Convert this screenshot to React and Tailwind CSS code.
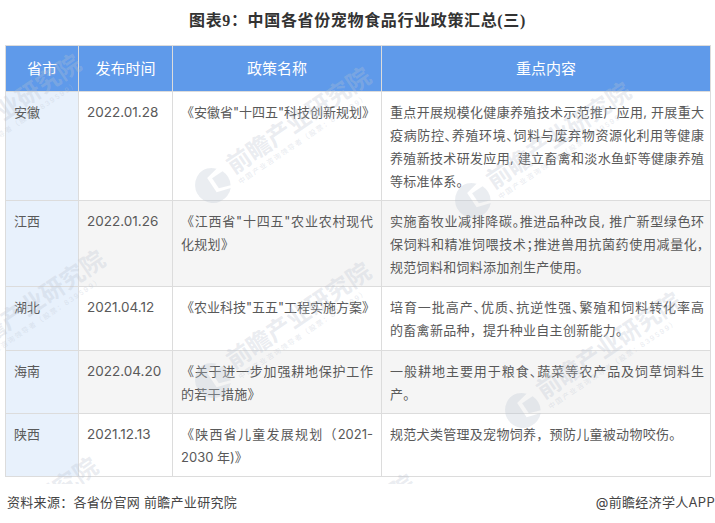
const WM = ({ x, y }) => (
  <div
    className="absolute flex items-center w-[230px] h-[44px] origin-[18px_22px] rotate-[-34deg]"
    style={{ left: x - 18, top: y - 22 }}
  >
    <svg width="36" height="36" viewBox="0 0 36 36" className="shrink-0">
      <path d="M18 0a18 18 0 1 0 13 30.500L17 26V9l13-2.500A18 18 0 0 0 18 0z" fill="#b9c2cf" fillOpacity="0.3" />
      <path d="M21 12h12.500a18 18 0 0 1-1 16L21 24z" fill="#b9c2cf" fillOpacity="0.3" />
    </svg>
    <div className="ml-[5px] flex flex-col text-[#b9c2cf]/30 whitespace-nowrap">
      <span className="text-[24px] leading-[26px] font-bold">前瞻产业研究院</span>
      <span className="text-[7px] leading-[10px] tracking-[1.500px] font-medium">中国产业咨询领导者（股票：839599）</span>
    </div>
  </div>
);

const marks = [
  [-77, 172], [213, 185], [473, 200],
  [-53, 368], [213, 380], [523, 410],
  [-60, 575], [257, 592],
];

const L = ({ children, j = true, palt = false }) => (
  <span
    className={
      "block whitespace-nowrap " +
      (j ? "[text-align:justify] [text-align-last:justify] " : "tracking-[0.3px] ") +
      (palt ? "[font-feature-settings:'palt']" : "")
    }
  >
    {children}
  </span>
);

const rows = [
  {
    h: "h-[109px]",
    bg: "bg-white",
    p: "安徽",
    d: "2022.01.28",
    n: [<L j={false} key="1"><span className="tracking-normal">《安徽省"十四五"科技创新规划》</span></L>],
    c: [
      <L key="1" palt>重点开展规模化健康养殖技术示范推广应用, 开展重大</L>,
      <L key="2" palt>疫病防控、养殖环境、饲料与废弃物资源化利用等健康</L>,
      <L key="3" palt>养殖新技术研发应用, 建立畜禽和淡水鱼虾等健康养殖</L>,
      <L key="4" j={false}>等标准体系。</L>,
    ],
  },
  {
    h: "h-[86px]",
    bg: "bg-[#f5f5f5]",
    p: "江西",
    d: "2022.01.26",
    n: [<L key="1">《江西省"十四五"农业农村现代</L>, <L key="2" j={false}>化规划》</L>],
    c: [
      <L key="1" palt>实施畜牧业减排降碳。推进品种改良, 推广新型绿色环</L>,
      <L key="2" palt>保饲料和精准饲喂技术；推进兽用抗菌药使用减量化，</L>,
      <L key="3" j={false}>规范饲料和饲料添加剂生产使用。</L>,
    ],
  },
  {
    h: "h-[64px]",
    bg: "bg-white",
    p: "湖北",
    d: "2021.04.12",
    n: [<L j={false} key="1"><span className="tracking-normal">《农业科技"五五"工程实施方案》</span></L>],
    c: [
      <L key="1" palt>培育一批高产、优质、抗逆性强、繁殖和饲料转化率高</L>,
      <L key="2" j={false}>的畜禽新品种，提升种业自主创新能力。</L>,
    ],
  },
  {
    h: "h-[63px]",
    bg: "bg-[#f5f5f5]",
    p: "海南",
    d: "2022.04.20",
    n: [<L key="1">《关于进一步加强耕地保护工作</L>, <L key="2" j={false}>的若干措施》</L>],
    c: [
      <L key="1" palt>一般耕地主要用于粮食、蔬菜等农产品及饲草饲料生</L>,
      <L key="2" j={false}>产。</L>,
    ],
  },
  {
    h: "h-[63px]",
    bg: "bg-white",
    p: "陕西",
    d: "2021.12.13",
    n: [<L key="1">《陕西省儿童发展规划（2021-</L>, <L key="2" j={false}><span className="tracking-normal">2030 年)》</span></L>],
    c: [<L key="1" j={false}>规范犬类管理及宠物饲养，预防儿童被动物咬伤。</L>],
  },
];

export default function App() {
  return (
    <div className="relative w-[715px] h-[523px] overflow-hidden bg-white text-[#595959] font-['Inter','Noto_Sans_CJK_SC',sans-serif]">
      <h1 className="h-[45px] pt-[10px] text-center text-[16px] leading-[22px] font-bold text-[#333] tracking-[0.65px] font-['Liberation_Serif','Noto_Sans_CJK_SC',serif]">
        图表9：中国各省份宠物食品行业政策汇总(三)
      </h1>
      <table className="ml-[5px] w-[705px] table-fixed border-collapse text-[13px] leading-[23px]">
        <colgroup>
          <col className="w-[73px]" />
          <col className="w-[94px]" />
          <col className="w-[209px]" />
          <col className="w-[329px]" />
        </colgroup>
        <thead>
          <tr className="h-[46px] bg-[#5f9aea] text-white text-[15px] font-normal">
            <th className="border border-[#dcdcdc] font-normal">省市</th>
            <th className="border border-[#dcdcdc] font-normal">发布时间</th>
            <th className="border border-[#dcdcdc] font-normal">政策名称</th>
            <th className="border border-[#dcdcdc] font-normal">重点内容</th>
          </tr>
        </thead>
        <tbody>
          {rows.map((r) => (
            <tr key={r.p} className={r.h + " " + r.bg}>
              <td className="border border-[#dcdcdc] bg-[#e8f1fc] align-top pt-[9px] pl-[8px]">{r.p}</td>
              <td className="border border-[#dcdcdc] align-top pt-[9px] pl-[8px] text-[13.5px]">{r.d}</td>
              <td className="border border-[#dcdcdc] align-top pt-[9px] px-[8px]">{r.n}</td>
              <td className="border border-[#dcdcdc] align-top pt-[9px] pl-[8px] pr-[6px]">{r.c}</td>
            </tr>
          ))}
        </tbody>
      </table>
      <div className="mt-[15px] flex justify-between items-center pl-[7px] text-[13px] leading-[20px] text-[#444]">
        <span className="tracking-[0.3px]">资料来源：各省份官网 前瞻产业研究院</span>
        <span className="tracking-[0.3px]">@前瞻经济学人APP</span>
      </div>
      <div className="absolute left-0 top-0 w-[715px] h-[484px] overflow-hidden pointer-events-none">
        {marks.map(([x, y]) => (
          <WM key={x + "-" + y} x={x} y={y} />
        ))}
      </div>
    </div>
  );
}
